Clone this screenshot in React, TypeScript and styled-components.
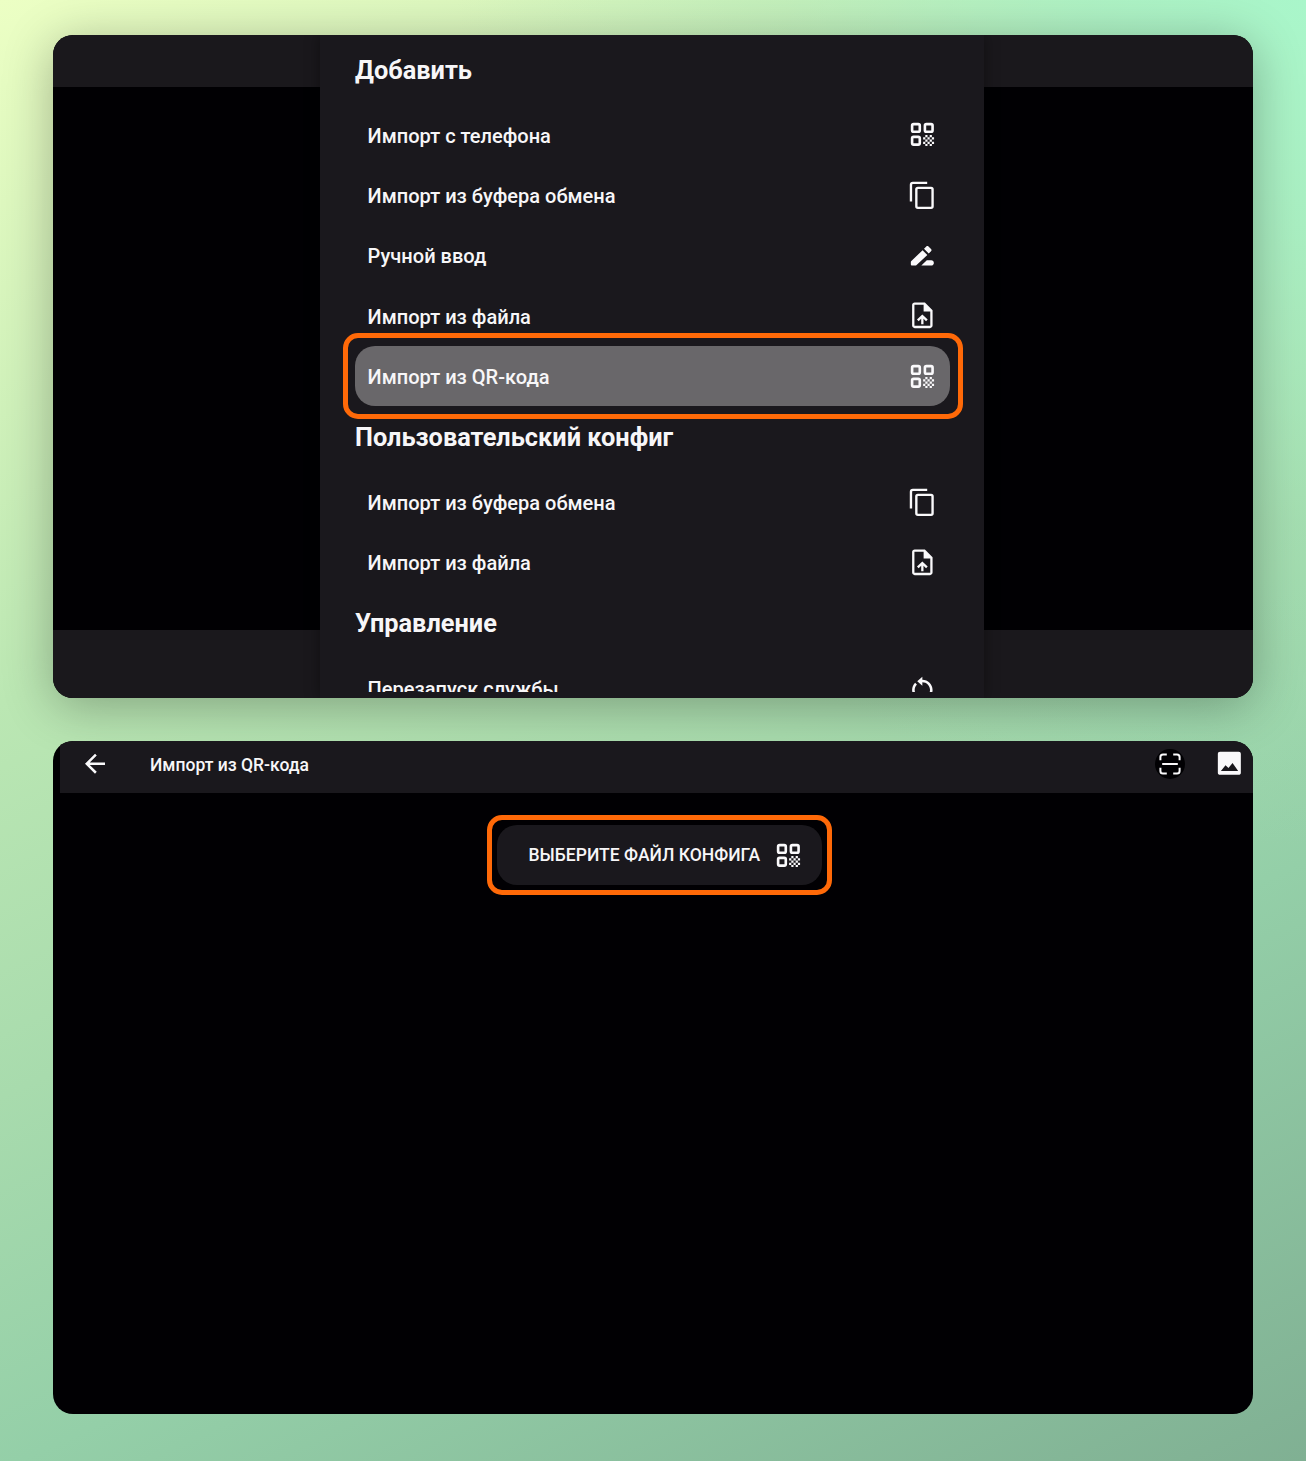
import React from 'react';
import styled, { createGlobalStyle, css } from 'styled-components';

const GlobalStyle = createGlobalStyle`
  * { box-sizing: border-box; }
  body {
    margin: 0;
    font-family: Roboto, "Noto Sans", sans-serif;
    color: #f7f6f8;
  }
`;

const Page = styled.main`
  width: 1306px;
  height: 1461px;
  padding: 35px 53px 0;
  display: flex;
  flex-direction: column;
  gap: 43px;
  overflow: hidden;
  background:
    radial-gradient(circle at 100% 0, #a9f6ca 0, rgba(166, 243, 200, 0.75) 220px, rgba(160, 232, 188, 0.3) 520px, rgba(155, 220, 178, 0) 850px),
    linear-gradient(155deg, #ecffc4 0%, #bbe7b3 34%, #a8dbad 53%, #94cfa8 71%, #80b093 100%);
`;

const Screen = styled.section<{ $height: number; $raised?: boolean }>`
  display: flex;
  flex: none;
  height: ${p => p.$height}px;
  border-radius: 20px;
  overflow: hidden;
  background: #010003;
  ${p => p.$raised && css`box-shadow: 0 8px 50px rgba(0, 0, 0, 0.29);`}
`;

const Side = styled.div<{ $width: number }>`
  width: ${p => p.$width}px;
  display: flex;
  flex-direction: column;
  justify-content: space-between;
`;

const Band = styled.div<{ $height: number }>`
  height: ${p => p.$height}px;
  background: #1a181c;
`;

const Sheet = styled.div`
  position: relative;
  width: 664px;
  padding: 3.8px 34px 0 35px;
  background: #1a181d;
  box-shadow: 0 0 14px rgba(0, 0, 0, 0.4);
`;

const List = styled.div`
  height: 653.2px;
  overflow: hidden;
  margin: 0 -20px;
  padding: 0 20px;
`;

const Heading = styled.h2`
  margin: 0;
  height: 65.7px;
  font-size: 25.35px;
  font-weight: 700;
  line-height: 63.4px;
  white-space: nowrap;
`;

const Row = styled.div<{ $active?: boolean }>`
  position: relative;
  height: 60.33px;
  padding: 0 12.4px 0 12.6px;
  display: flex;
  align-items: center;
  justify-content: space-between;
  border-radius: 20px;
  font-size: 20.05px;
  font-weight: 500;
  white-space: nowrap;
  background: ${p => (p.$active ? '#69676a' : 'transparent')};
`;

const RowLabel = styled.span`
  padding-top: 1.8px;
`;

const Marker = styled.div<{ $inset: string }>`
  position: absolute;
  inset: ${p => p.$inset};
  border: 5px solid #ff6908;
  border-radius: 15px;
  pointer-events: none;
`;

const Svg = styled.svg<{ $size?: number }>`
  display: block;
  flex: none;
  width: ${p => p.$size ?? 30.7}px;
  height: ${p => p.$size ?? 30.7}px;
  fill: #faf9fb;
`;

const ImportScreen = styled.div`
  flex: 1;
  display: flex;
  flex-direction: column;
  align-items: center;
`;

const AppBar = styled.header`
  align-self: stretch;
  height: 52px;
  margin-left: 7px;
  padding: 0 8px 7px 20px;
  display: flex;
  align-items: center;
  background: #1a181d;
`;

const Title = styled.h1`
  margin: 2px auto 0 40px;
  font-size: 17.5px;
  font-weight: 500;
`;

const ScanButton = styled.span`
  width: 30px;
  height: 30px;
  margin-right: 29.5px;
  border-radius: 50%;
  background: #010003;
`;

const PickButton = styled.div`
  position: relative;
  width: 325px;
  height: 60px;
  margin: 32px 0 0 13px;
  padding: 0 18.5px 0 31.5px;
  display: flex;
  align-items: center;
  justify-content: space-between;
  border-radius: 20px;
  background: #1a181d;
  font-size: 17.55px;
  font-weight: 500;
  white-space: nowrap;
`;

const QrIcon = () => (
  <Svg viewBox="0 0 24 24">
    <g fill="none" stroke="#faf9fb" strokeWidth="2.05">
      <rect x="4" y="4" width="6" height="6" rx="1.2" />
      <rect x="14" y="4" width="6" height="6" rx="1.2" />
      <rect x="4" y="14" width="6" height="6" rx="1.2" />
    </g>
    <path
      transform="translate(-1.3 -1.3) scale(1.07)"
      d="M14.6 13h1.6v1.6h-1.6zM17.8 13h1.6v1.6h-1.6zM13 14.6h1.6v1.6H13zM16.2 14.6h1.6v1.6h-1.6zM19.4 14.6H21v1.6h-1.6zM14.6 16.2h1.6v1.6h-1.6zM17.8 16.2h1.6v1.6h-1.6zM13 17.8h1.6v1.6H13zM16.2 17.8h1.6v1.6h-1.6zM19.4 17.8H21v1.6h-1.6zM14.6 19.4h1.6V21h-1.6zM17.8 19.4h1.6V21h-1.6z"
    />
  </Svg>
);

const CopyIcon = () => (
  <Svg viewBox="0 0 24 24">
    <g fill="none" stroke="#faf9fb" strokeWidth="1.85">
      <path d="M15.8 2.3H4.6Q3.1 2.3 3.1 3.8V16.8" />
      <rect x="7.3" y="6.2" width="12.7" height="15.6" rx="1.2" />
    </g>
  </Svg>
);

const PenIcon = () => (
  <Svg viewBox="0 0 24 24">
    <path d="M3 17.2c0-.3.1-.6.4-.8l8.8-8.4 3.7 3.8-8.6 7.9c-.2.2-.5.3-.8.3H4c-.6 0-1-.4-1-1zM13.3 6.9l1.8-1.8c.5-.5 1.2-.5 1.7 0l2 2c.5.5.5 1.2 0 1.7L17 10.6zM11.2 20l4.3-4.1H19c1.1 0 2 .9 2 2s-.9 2.1-2 2.1z" />
  </Svg>
);

const UploadIcon = () => (
  <Svg viewBox="0 0 24 24">
    <path d="M14 2H6c-1.1 0-2 .9-2 2v16c0 1.1.9 2 2 2h12c1.1 0 2-.9 2-2V8l-6-6zm4.2 18.2H5.8V3.8H13V9h5.2v11.2zM7.8 15.3l1.3 1.3 2-1.9V19h1.8v-4.3l2 1.9 1.3-1.3L12 11.3z" />
  </Svg>
);

const RestartIcon = () => (
  <Svg viewBox="0 0 24 24">
    <path d="M12 5.3V3L8 6.4l4 3.5V7.2c3.31 0 6 2.69 6 6 0 2.97-2.17 5.43-5 5.91v2.02c3.95-.49 7-3.85 7-7.93 0-4.42-3.58-7.9-8-7.9zM6 13.2c0-1.65.67-3.15 1.76-4.24L6.34 7.54C4.9 8.99 4 10.99 4 13.2c0 4.08 3.05 7.44 7 7.93v-2.02c-2.83-.48-5-2.94-5-5.91z" />
  </Svg>
);

const BackIcon = () => (
  <Svg $size={30} viewBox="0 0 24 24">
    <path d="M20 10.7H7.83l5.59-5.59L12 3.7l-8 8 8 8 1.41-1.41L7.83 12.7H20v-2z" />
  </Svg>
);

const ScanIcon = () => (
  <Svg $size={30} viewBox="0 0 30 30">
    <path
      d="M5.4 11.3V8Q5.4 5.4 8 5.4h3.8M18.2 5.4H22q2.6 0 2.6 2.6v3.3M24.6 18.7V22q0 2.6-2.6 2.6h-3.8M11.8 24.6H8Q5.4 24.6 5.4 22v-3.3M7.2 15h15.6"
      fill="none"
      stroke="#faf9fb"
      strokeWidth="2"
    />
  </Svg>
);

const ImageIcon = () => (
  <Svg viewBox="0 0 24 24">
    <path d="M21 19.3V4.7c0-1-.7-1.7-1.7-1.7H4.7C3.7 3 3 3.7 3 4.7v14.6c0 1 .7 1.7 1.7 1.7h14.6c1 0 1.7-.7 1.7-1.7zM9 13.4l2.3 2.2 3.2-3.8 4.4 6.1H5.4z" />
  </Svg>
);

type Item = { label: string; Icon: React.FC; active?: boolean };
type Group = { title: string; items: Item[] };

const groups: Group[] = [
  {
    title: 'Добавить',
    items: [
      { label: 'Импорт с телефона', Icon: QrIcon },
      { label: 'Импорт из буфера обмена', Icon: CopyIcon },
      { label: 'Ручной ввод', Icon: PenIcon },
      { label: 'Импорт из файла', Icon: UploadIcon },
      { label: 'Импорт из QR-кода', Icon: QrIcon, active: true },
    ],
  },
  {
    title: 'Пользовательский конфиг',
    items: [
      { label: 'Импорт из буфера обмена', Icon: CopyIcon },
      { label: 'Импорт из файла', Icon: UploadIcon },
    ],
  },
  {
    title: 'Управление',
    items: [{ label: 'Перезапуск службы', Icon: RestartIcon }],
  },
];

export default function App() {
  return (
    <>
      <GlobalStyle />
      <Page>
        <Screen $height={663} $raised>
          <Side $width={267}>
            <Band $height={52} />
            <Band $height={68} />
          </Side>
          <Sheet>
            <List>
              {groups.map(group => (
                <React.Fragment key={group.title}>
                  <Heading>{group.title}</Heading>
                  {group.items.map(({ label, Icon, active }) => (
                    <Row key={label} $active={active}>
                      <RowLabel>{label}</RowLabel>
                      <Icon />
                      {active && <Marker $inset="-13px -13px -12.5px -12px" />}
                    </Row>
                  ))}
                </React.Fragment>
              ))}
            </List>
          </Sheet>
          <Side $width={269}>
            <Band $height={52} />
            <Band $height={68} />
          </Side>
        </Screen>
        <Screen $height={673}>
          <ImportScreen>
            <AppBar>
              <BackIcon />
              <Title>Импорт из QR-кода</Title>
              <ScanButton>
                <ScanIcon />
              </ScanButton>
              <ImageIcon />
            </AppBar>
            <PickButton>
              <span>ВЫБЕРИТЕ ФАЙЛ КОНФИГА</span>
              <QrIcon />
              <Marker $inset="-10px" />
            </PickButton>
          </ImportScreen>
        </Screen>
      </Page>
    </>
  );
}
